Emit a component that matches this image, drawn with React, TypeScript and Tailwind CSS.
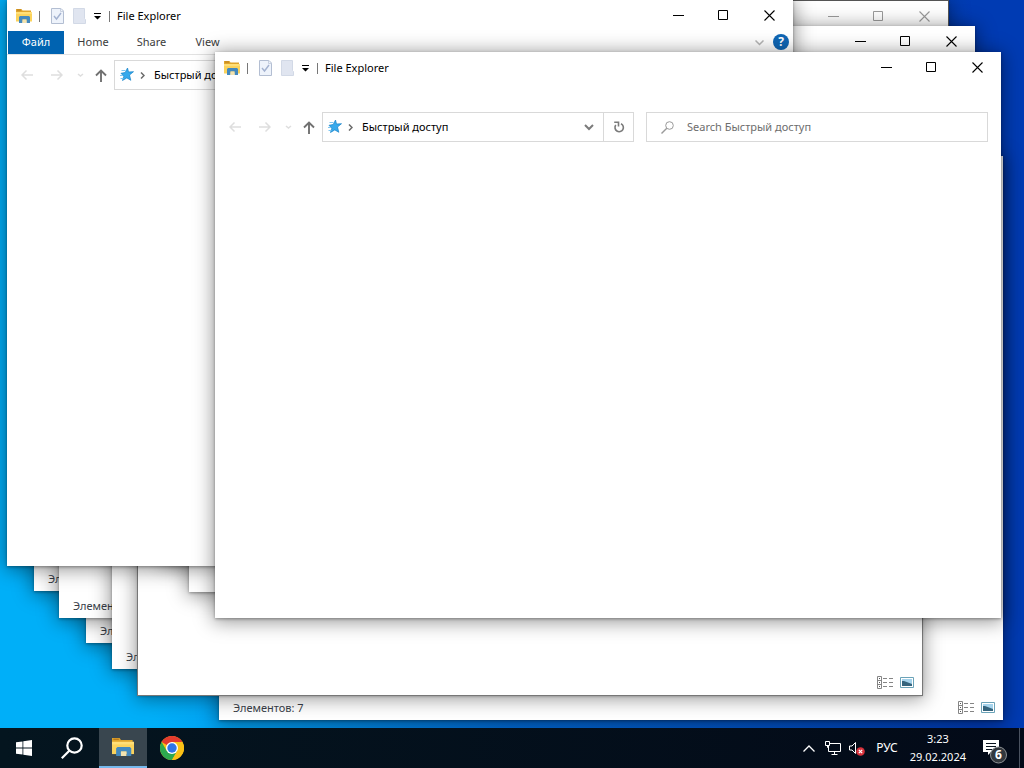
import React from "react";

type Box = { box: string; children?: React.ReactNode };

const shadow = "shadow-[0_2px_18px_2px_rgba(0,0,0,0.4),0_1px_3px_rgba(0,0,0,0.35)]";

function Win({ box, children }: Box) {
  return <section className={`absolute flex flex-col bg-white ${box}`}>{children}</section>;
}

function FolderIcon({ className = "" }: { className?: string }) {
  return (
    <svg className={className} viewBox="0 0 16 14" preserveAspectRatio="none" aria-hidden="true">
      <path d="M0 0h5.500l1 1.500H15V5H0z" fill="#dfa52c" />
      <path d="M1 .5h4v1H1z" fill="#b97a1c" />
      <path d="M0 3h16v9.500H0z" fill="#fbd35c" />
      <path d="M0 3h16v2H0z" fill="#ffdf78" />
      <path d="M4 7h9l1 1v6h-3.500v-3.500h-4V14H3V8z" fill="#4389bf" />
      <path d="M6.500 10.500h4V14h-4z" fill="#f3e3b0" />
    </svg>
  );
}

function CaptionButtons({ faded = false }: { faded?: boolean }) {
  const tone = faded ? "text-[#9b9b9b]" : "text-black";
  const button = "flex h-[30px] items-center justify-center";
  return (
    <div className={`ml-auto flex shrink-0 ${tone}`}>
      <button className={`w-[45px] ${button}`} aria-label="Minimize">
        <svg className="h-[11px] w-[11px]" viewBox="0 0 11 11" stroke="currentColor"><path d="M0 5.500h11" /></svg>
      </button>
      <button className={`w-[45px] ${button}`} aria-label="Maximize">
        <svg className="h-[11px] w-[11px]" viewBox="0 0 11 11" fill="none" stroke="currentColor"><path d="M.5.500h9v9H.5z" /></svg>
      </button>
      <button className={`w-[47px] ${button}`} aria-label="Close">
        <svg className="h-[11px] w-[11px]" viewBox="0 0 11 11" stroke="currentColor" strokeWidth="1.100"><path d="M.5.500l10 10M10.500.500l-10 10" /></svg>
      </button>
    </div>
  );
}

function TitleBar() {
  return (
    <header className="flex h-[31px] shrink-0 items-start">
      <div className="flex h-8 items-center pl-[9px]">
        <FolderIcon className="h-[14px] w-4" />
        <span className="ml-[7px] h-[11px] w-px bg-[#777]" />
        <button className="ml-[11px]" aria-label="Properties">
          <svg className="h-4 w-[13px]" viewBox="0 0 13 16" fill="none">
            <path d="M.5.500h9.500l2.500 2.500v12.500H.5z" fill="#eef3fb" stroke="#b3bed2" />
            <path d="M9.500.500V3.500h3" stroke="#c8d1e0" />
            <path d="M3 8l2.500 3L10 5" stroke="#a3b2d0" strokeWidth="1.400" />
          </svg>
        </button>
        <button className="ml-[9px]" aria-label="New folder">
          <svg className="h-4 w-[13px]" viewBox="0 0 13 16">
            <path d="M.5.500h11v10l1 1v4H.5z" fill="#e0e5f0" stroke="#d2d9e6" />
          </svg>
        </button>
        <button className="ml-2" aria-label="Customize toolbar">
          <svg className="h-[7px] w-[7px]" viewBox="0 0 7 7"><path d="M0 0h7v1H0zM0 3h7L3.500 6.500z" /></svg>
        </button>
        <span className="ml-2 h-[11px] w-px bg-[#777]" />
        <h1 className="ml-[7px] text-[11px] whitespace-nowrap text-black">File Explorer</h1>
      </div>
      <CaptionButtons />
    </header>
  );
}

const arrow = "h-3 w-3 shrink-0";

function NavRow({ search }: { search: string }) {
  return (
    <div className="flex h-[30px] shrink-0 items-center pr-[13px] pl-[14px]">
      <button className="text-[#dedede]" aria-label="Back">
        <svg className={arrow} viewBox="0 0 12 12" fill="none" stroke="currentColor" strokeWidth="1.500"><path d="M12 6H1M5.500 1.500L1 6l4.500 4.500" /></svg>
      </button>
      <button className="ml-[18px] text-[#dedede]" aria-label="Forward">
        <svg className={arrow} viewBox="0 0 12 12" fill="none" stroke="currentColor" strokeWidth="1.500"><path d="M0 6h11M6.500 1.500L11 6l-4.500 4.500" /></svg>
      </button>
      <button className="ml-[14px] text-[#dedede]" aria-label="Recent locations">
        <svg className="h-[5px] w-[7px]" viewBox="0 0 7 5" fill="none" stroke="currentColor" strokeWidth="1.500"><path d="M1 1l2.500 2L6 1" /></svg>
      </button>
      <button className="ml-[11px] text-[#717171]" aria-label="Up">
        <svg className="h-[13px] w-3 shrink-0" viewBox="0 0 12 13" fill="none" stroke="currentColor" strokeWidth="1.900"><path d="M6 13V1.500M1 6.500l5-5 5 5" /></svg>
      </button>
      <div className="ml-[7px] flex h-[30px] w-[312px] shrink-0 items-center border border-[#d9d9d9] pl-[5px]">
        <svg className="h-[14px] w-[14px] shrink-0" viewBox="0 0 14 14" aria-hidden="true">
          <path d="M7.500 0l1 4 5-.3-4 3.300 1.300 5.300-4-2.400L2.500 12.500l1.300-4.300L1 5.300l4.200-.8z" fill="#35a9ec" stroke="#1683c9" strokeWidth=".7" />
          <path d="M1.500 2.500h4M0 7.500h3M.5 10.500h3" stroke="#7cc6f2" />
        </svg>
        <svg className="ml-[6px] h-[7px] w-[5px] shrink-0" viewBox="0 0 5 7" fill="none" stroke="#6b6b6b" strokeWidth="1.500"><path d="M1 .5l3 3-3 3" /></svg>
        <span className="ml-[9px] text-[11px] whitespace-nowrap text-black">Быстрый доступ</span>
        <button className="ml-auto mr-[9px]" aria-label="Previous locations">
          <svg className="h-[7px] w-[10px]" viewBox="0 0 10 7" fill="none" stroke="#7b7b7b" strokeWidth="2"><path d="M1 1l4 4 4-4" /></svg>
        </button>
        <button className="flex h-[28px] w-[30px] items-center justify-center border-l border-[#d9d9d9]" aria-label="Refresh">
          <svg className="h-3 w-3" viewBox="0 0 12 12" fill="none" stroke="#7b7b7b" strokeWidth="1.600"><path d="M8 2.700A4.200 4.200 0 1 1 2.800 4M1.200 1.300H5.500V5.500" /></svg>
        </button>
      </div>
      <label className="ml-3 flex h-[30px] min-w-0 grow items-center border border-[#d9d9d9] pl-[14px]">
        <svg className="h-[13px] w-[13px] shrink-0" viewBox="0 0 13 13" fill="none" stroke="#9a9a9a"><circle cx="8.500" cy="4.500" r="3.800" /><path d="M5.800 7.200L.5 12.500" strokeWidth="1.400" /></svg>
        <input
          className="ml-[13px] min-w-0 grow bg-transparent text-[11px] text-black outline-none placeholder:text-[#6d6d6d]"
          placeholder={search}
          aria-label={search}
        />
      </label>
    </div>
  );
}

function Status({ text, left }: { text?: string; left?: boolean }) {
  return (
    <footer className="mt-auto flex h-6 shrink-0 items-center overflow-hidden pr-2 pl-[14px] text-[11px] text-[#3a3f4a]">
      {text && <span className="whitespace-nowrap">{text}</span>}
      {!left && (
        <div className="mb-[2px] ml-auto flex items-center gap-[7px]">
          <button aria-label="Details view">
            <svg className="h-[13px] w-4" viewBox="0 0 16 13" fill="none" stroke="#858585">
              <path d="M.5.500h4v12h-4zM.5 4.500h4M.5 8.500h4" />
              <path d="M2 2.500h1M2 6.500h1M2 10.500h1" stroke="#555" />
              <path d="M6 2.500h4M12 2.500h4M6 6.500h4M12 6.500h4M6 10.500h4M12 10.500h4" />
            </svg>
          </button>
          <button aria-label="Thumbnail view">
            <svg className="h-[11px] w-[14px]" viewBox="0 0 14 11">
              <path d="M.5.500h13v10H.5z" fill="#fff" stroke="#6ba3b8" />
              <path d="M2 2h10v7H2z" fill="#a5d3ec" />
              <path d="M2 4h2l4 1.500L12 7v2H2z" fill="#35647d" />
            </svg>
          </button>
        </div>
      )}
    </footer>
  );
}

function Desktop() {
  return (
    <main className="relative min-h-0 grow overflow-hidden bg-linear-to-r from-[#00aff8] from-15% via-[#0069d4] via-50% to-[#003bb3] to-95%">
      <Win box={`top-[78px] left-[86px] h-[565px] w-[786px] ${shadow}`}><Status left text="Элементов: 7" /></Win>
      <Win box={`top-[26px] left-[34px] h-[565px] w-[786px] ${shadow}`}><Status left text="Элементов: 7" /></Win>
      <Win box={`top-[52px] left-[59px] h-[566px] w-[786px] ${shadow}`}><Status left text="Элементов: 7" /></Win>
      <Win box={`top-[104px] left-[112px] h-[565px] w-[786px] ${shadow}`}><Status left text="Элементов: 7" /></Win>
      <Win box={`top-[156px] left-[219px] h-[564px] w-[784px] ${shadow}`}><Status text="Элементов: 7" /></Win>
      <Win box={`top-[130px] left-[138px] h-[565px] w-[784px] outline outline-[#777] ${shadow}`}><Status /></Win>
      <Win box={`top-px left-[163px] h-[560px] w-[785px] outline outline-[#555] ${shadow}`}><CaptionButtons faded /></Win>
      <Win box={`top-[26px] left-[189px] h-[566px] w-[786px] ${shadow}`}><CaptionButtons /></Win>
      <Win box={`top-0 left-[7px] h-[566px] w-[786px] ${shadow}`}>
        <TitleBar />
        <nav className="flex h-[24px] shrink-0 items-stretch border-b border-[#e2e2e2] pl-px text-[11px] text-[#3b3b3b]">
          <button className="w-14 bg-[#0063b1] text-white">Файл</button>
          <button className="w-[58px]">Home</button>
          <button className="w-[59px]">Share</button>
          <button className="w-[53px]">View</button>
          <button className="ml-auto" aria-label="Expand ribbon">
            <svg className="h-[6px] w-[9px]" viewBox="0 0 9 6" fill="none" stroke="#b5b5b5" strokeWidth="1.500"><path d="M.5.500l4 4 4-4" /></svg>
          </button>
          <button className="mr-1 mb-px ml-[9px] flex h-4 w-4 items-center justify-center self-center rounded-full bg-[#0f66b5] text-[12px] font-bold text-white" aria-label="Help">?</button>
        </nav>
        <div className="h-[5px] shrink-0" />
        <NavRow search="Search Быстрый доступ" />
      </Win>
      <Win box={`top-[52px] left-[215px] h-[566px] w-[786px] ${shadow}`}>
        <TitleBar />
        <div className="h-[29px] shrink-0" />
        <NavRow search="Search Быстрый доступ" />
      </Win>
    </main>
  );
}

function Taskbar() {
  return (
    <footer className="flex h-10 shrink-0 items-stretch bg-linear-to-r from-[#04151f] to-[#030a18] text-[12px] text-white">
      <button className="flex w-12 items-center justify-center" aria-label="Start">
        <svg className="h-4 w-4" viewBox="0 0 16 16" fill="#fff"><path d="M0 2.300l6.500-.9v6.100H0zM7.300 1.300L16 0v7.500H7.300zM0 8.400h6.500v6.100L0 13.700zM7.300 8.400H16V16l-8.700-1.300z" /></svg>
      </button>
      <button className="flex w-12 items-center justify-center" aria-label="Search">
        <svg className="h-[22px] w-[22px]" viewBox="0 0 22 22" fill="none" stroke="#fff" strokeWidth="2.200"><circle cx="13.500" cy="8.500" r="7.200" /><path d="M8.500 13.500L.8 21.200" /></svg>
      </button>
      <button className="ml-[3px] flex w-12 items-center justify-center border-b-2 border-[#76b9ed] bg-[#39464f]" aria-label="File Explorer">
        <FolderIcon className="h-[18px] w-[22px]" />
      </button>
      <button className="ml-px flex w-12 items-center justify-center" aria-label="Chrome">
        <svg className="h-6 w-6" viewBox="0 0 24 24">
          <circle cx="12" cy="12" r="12" fill="#fbc116" />
          <path d="M12 12L1.600 6A12 12 0 0 1 22.400 6H12z" fill="#e33b2e" />
          <path d="M1.600 6A12 12 0 0 0 12 24l5.200-9L12 12 6.800 15z" fill="#2da94f" />
          <path d="M12 6h10.400A12 12 0 0 1 12 24l5.200-9z" fill="#fbc116" />
          <circle cx="12" cy="12" r="6" fill="#fff" />
          <circle cx="12" cy="12" r="4.700" fill="#2f75e8" />
        </svg>
      </button>
      <div className="ml-auto flex items-center">
        <button aria-label="Show hidden icons">
          <svg className="h-[7px] w-3" viewBox="0 0 12 7" fill="none" stroke="#fff" strokeWidth="1.300"><path d="M.5 6.500L6 1l5.500 5.500" /></svg>
        </button>
        <button className="ml-[10px]" aria-label="Network">
          <svg className="h-[14px] w-4" viewBox="0 0 16 14" fill="none" stroke="#fff"><path d="M5 2.500h10.500v8H3.500V5M9.500 10.500v3M6.500 13.500h6M.5.500h4v4h-4zM2.500 4.500v2h1" /></svg>
        </button>
        <button className="ml-2" aria-label="Volume muted">
          <svg className="h-[15px] w-4" viewBox="0 0 16 15" fill="none"><path d="M.5 5h2.500l3.500-3.500v11L3 9H.5z" stroke="#fff" /><circle cx="11.500" cy="10.500" r="4.300" fill="#d8313b" /><path d="M9.800 8.800l3.400 3.400M13.200 8.800l-3.400 3.400" stroke="#fff" strokeWidth="1.200" /></svg>
        </button>
        <button className="ml-[11px]">РУС</button>
        <button className="ml-3 flex flex-col items-center text-[11px] leading-[18px]">
          <span>3:23</span>
          <span>29.02.2024</span>
        </button>
        <button className="relative ml-[17px] h-6 w-6" aria-label="Notifications">
          <svg className="h-6 w-6 overflow-visible" viewBox="0 0 24 24">
            <path d="M0 4h16v12H8l-3 3v-3H0z" fill="#fff" />
            <path d="M3 7.500h10M3 10.500h10M3 13.500h6" stroke="#0a1420" />
            <circle cx="15.500" cy="19" r="8" fill="#33383e" stroke="#8d9195" />
          </svg>
          <span className="absolute top-[11px] left-[12px] text-[12px] leading-4 font-bold">6</span>
        </button>
        <span className="ml-3 h-10 w-px bg-[#4a5260]" />
        <span className="w-1" />
      </div>
    </footer>
  );
}

export default function App() {
  return (
    <div className="flex h-screen flex-col overflow-hidden font-['Noto_Sans','Open_Sans',sans-serif]">
      <Desktop />
      <Taskbar />
    </div>
  );
}
